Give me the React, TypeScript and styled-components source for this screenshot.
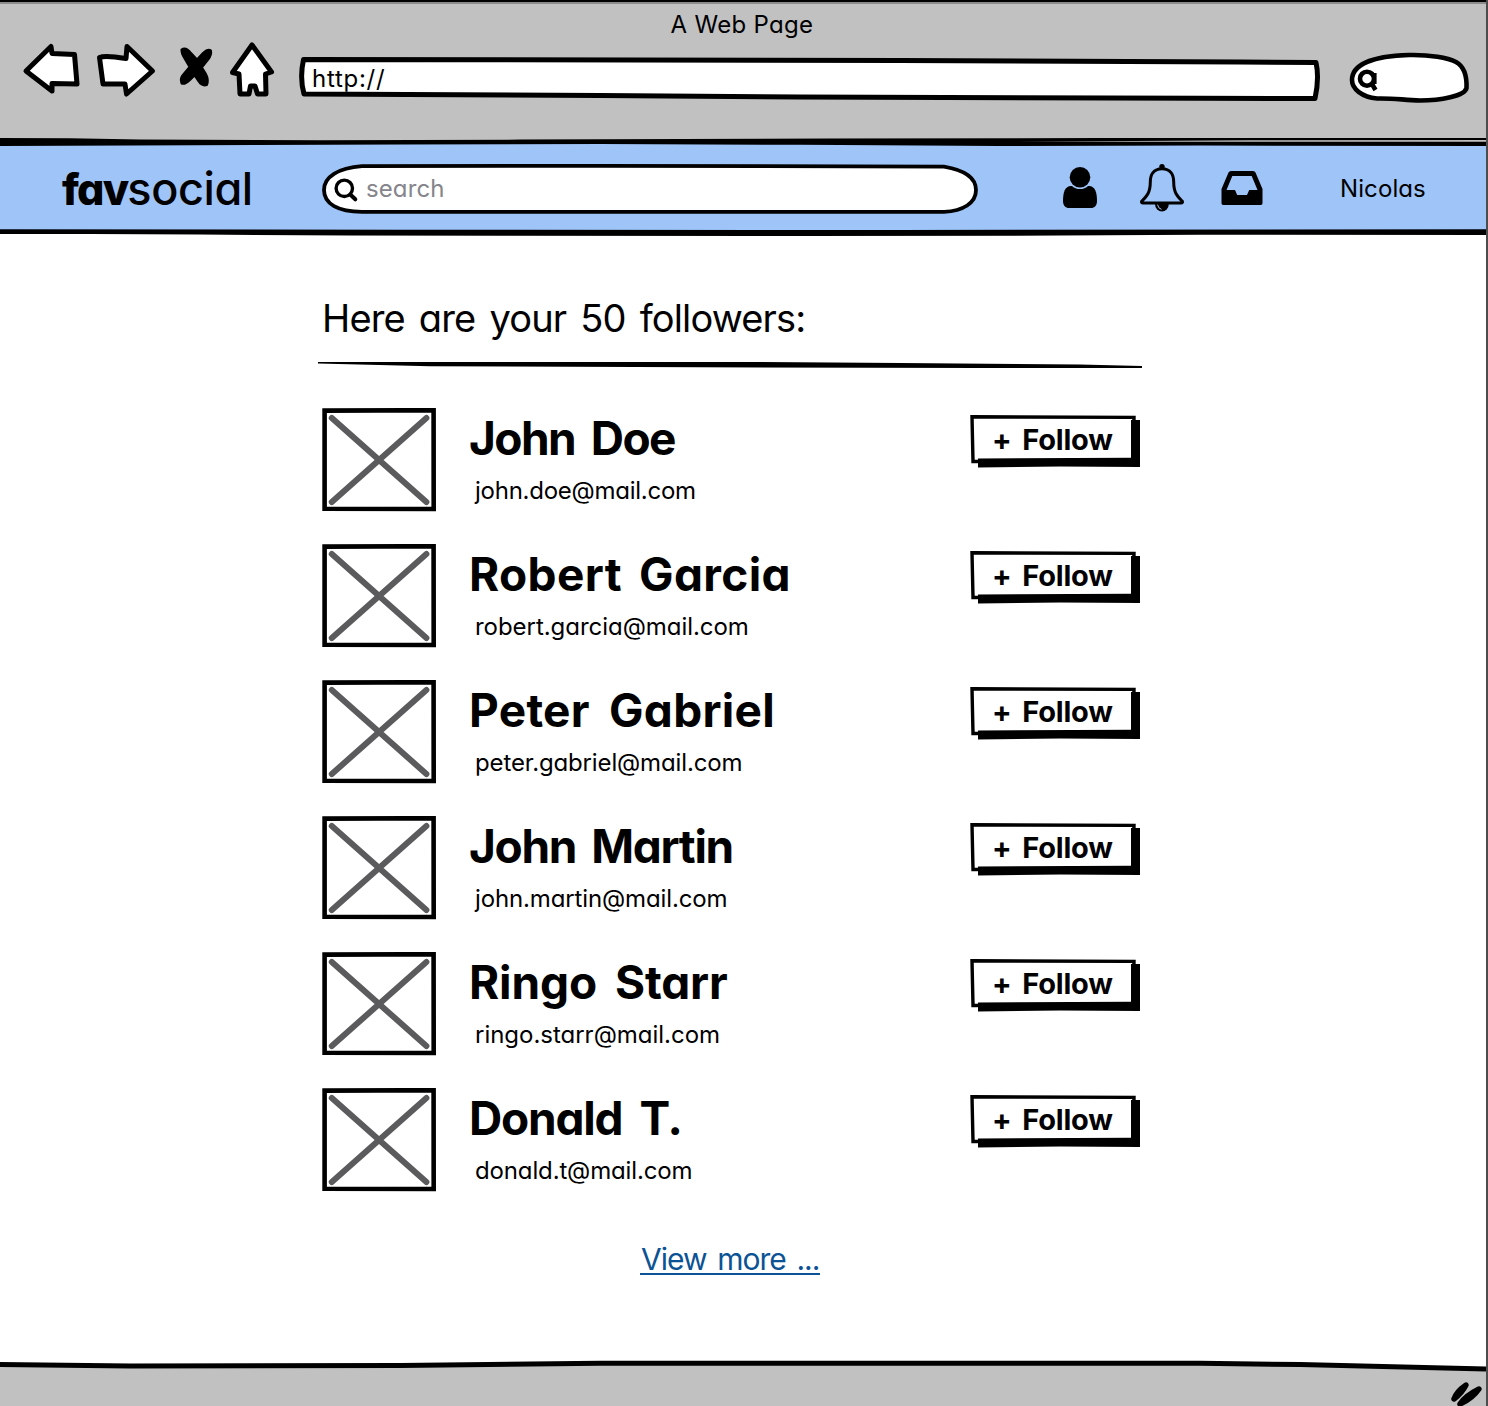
import React from 'react';
import styled, { createGlobalStyle } from 'styled-components';

const INK = '#000';
const CHROME = '#c1c1c1';
const BLUE = '#9fc4f7';
const LINK = '#0b5394';

const GlobalStyle = createGlobalStyle`
  body {
    margin: 0;
    background: #fff;
    color: ${INK};
    font-family: Inter, 'Open Sans', sans-serif;
    font-size: 24px;
    font-feature-settings: 'cv11';
  }
  svg { display: block; flex: none; }
`;

const Window = styled.div`
  box-sizing: border-box;
  display: flex;
  flex-direction: column;
  width: 1488px;
  height: 1406px;
  overflow: hidden;
  border-right: 2px solid #4c4c4c;
`;

const Chrome = styled.div`
  box-sizing: border-box;
  height: 138px;
  background: ${CHROME};
  border-top: 2px solid ${INK};
  box-shadow: inset 0 2px 0 #8b8b8b;
`;

const WindowTitle = styled.div`
  height: 40px;
  padding: 3px 2px 0 0;
  box-sizing: border-box;
  line-height: 40px;
  text-align: center;
  letter-spacing: 0.3px;
`;

const Toolbar = styled.div`
  display: flex;
  gap: 14px;
  padding-left: 22px;
`;

const Framed = styled.div`
  position: relative;
  display: flex;
  flex: none;
  > svg:first-child { position: absolute; inset: 0; }
`;

const AddressBar = styled(Framed)`
  width: 1024px;
  height: 64px;
  margin-left: 8px;
`;

const Address = styled.span`
  position: relative;
  padding: 13px 0 0 14px;
  line-height: 48px;
  letter-spacing: 0.74px;
`;

const BrowserSearch = styled.div`
  margin-left: 11px;
`;

const Rule = styled.div<{ $above: string; $below: string }>`
  flex: none;
  height: 8px;
  background: linear-gradient(${p => p.$above} 50%, ${p => p.$below} 50%);
`;

const Header = styled.header`
  box-sizing: border-box;
  display: flex;
  align-items: center;
  height: 82px;
  padding: 3px 0 0 62px;
  background: ${BLUE};
`;

const Logo = styled.div`
  width: 258px;
  font-size: 45px;
  font-weight: 500;
  line-height: 54px;
  letter-spacing: -0.4px;
  white-space: nowrap;
  b { font-size: 43px; font-weight: 800; letter-spacing: -1.8px; }
`;

const SearchField = styled(Framed)`
  align-items: center;
  width: 660px;
  height: 54px;
`;

const Placeholder = styled.span`
  position: relative;
  margin: -1px 0 0 46px;
  color: #85858b;
  letter-spacing: 0.1px;
`;

const HeaderIcons = styled.div`
  display: flex;
  gap: 32px;
  margin-left: 78px;
`;

const UserName = styled.div`
  margin-left: 72px;
  letter-spacing: 0.1px;
`;

const Main = styled.main`
  flex: 1;
  display: flex;
  flex-direction: column;
  width: 824px;
  margin-left: 318px;
`;

const Heading = styled.h1`
  margin: 58px 0 20px;
  padding-left: 4px;
  font-size: 38px;
  font-weight: 400;
  line-height: 48px;
  letter-spacing: -0.85px;
  word-spacing: 4.2px;
  white-space: nowrap;
`;

const Followers = styled.ul`
  display: flex;
  flex-direction: column;
  gap: 32px;
  margin: 38px 0 0;
  padding: 0 0 0 4px;
  list-style: none;
`;

const Follower = styled.li`
  display: flex;
  height: 104px;
`;

const Person = styled.div`
  box-sizing: border-box;
  flex: none;
  width: 533px;
  padding: 1px 0 0 33px;
`;

const Name = styled.div<{ $track: number; $gap: number }>`
  font-size: 46px;
  font-weight: 700;
  line-height: 59px;
  white-space: nowrap;
  letter-spacing: ${p => p.$track}px;
  word-spacing: ${p => p.$gap}px;
`;

const Email = styled.div<{ $track: number }>`
  padding-left: 6px;
  line-height: 46px;
  letter-spacing: ${p => p.$track}px;
`;

const FollowButton = styled.button`
  position: relative;
  flex: none;
  width: 173px;
  height: 64px;
  padding: 0 0 0 23px;
  border: 0;
  background: none;
  color: inherit;
  font: 700 29px/64px Inter, 'Open Sans', sans-serif;
  font-feature-settings: inherit;
  letter-spacing: -0.2px;
  word-spacing: 4px;
  text-align: left;
  white-space: nowrap;
  > svg { position: absolute; inset: 0; }
  > span { position: relative; }
`;

const ViewMore = styled.a`
  align-self: flex-start;
  box-sizing: border-box;
  width: 180px;
  margin: 53px 0 0 322px;
  color: ${LINK};
  border-bottom: 2px solid ${LINK};
  font-size: 30px;
  line-height: 28px;
  letter-spacing: -0.95px;
  word-spacing: 3px;
  text-indent: 1px;
  text-decoration: none;
  white-space: nowrap;
`;

const StatusBar = styled.footer`
  flex: none;
  display: flex;
  justify-content: flex-end;
  height: 32px;
  background: ${CHROME};
`;

type SketchProps = { box: [number, number, number, number]; width?: number; children: React.ReactNode };

const Sketch = ({ box, width = 5, children }: SketchProps) => (
  <svg
    width={box[2]}
    height={box[3]}
    viewBox={box.join(' ')}
    fill="#fff"
    stroke={INK}
    strokeWidth={width}
    strokeLinejoin="round"
    strokeLinecap="round"
    aria-hidden="true"
  >
    {children}
  </svg>
);

const Thumbnail = () => (
  <Sketch box={[322, 408, 114, 104]} width={4.6}>
    <path d="M324.6 410.6L433.6 410.2L433.7 509L324.6 508.8Z" strokeLinejoin="miter" />
    <path d="M331.8 418L426.4 502M426.4 418L331.8 502" stroke="#5b5b5d" strokeWidth="6" />
  </Sketch>
);

const people = [
  { name: 'John Doe', track: -1.6, gap: 6.5, email: 'john.doe@mail.com', mailTrack: -0.25 },
  { name: 'Robert Garcia', track: 0.35, gap: 6, email: 'robert.garcia@mail.com', mailTrack: -0.04 },
  { name: 'Peter Gabriel', track: 0.3, gap: 8, email: 'peter.gabriel@mail.com', mailTrack: -0.14 },
  { name: 'John Martin', track: -1.3, gap: 5.5, email: 'john.martin@mail.com', mailTrack: -0.13 },
  { name: 'Ringo Starr', track: -0.1, gap: 7, email: 'ringo.starr@mail.com', mailTrack: -0.02 },
  { name: 'Donald T.', track: -1.2, gap: 7.5, email: 'donald.t@mail.com', mailTrack: -0.14 },
];

export default function App() {
  return (
    <Window>
      <GlobalStyle />
      <Chrome>
        <WindowTitle>A Web Page</WindowTitle>
        <Toolbar>
          <Sketch box={[22, 42, 60, 64]}>
            <path d="M26 71L51 46.5L52 53.5L74.5 54.5L77 84L52 83.5L52 91Z" />
          </Sketch>
          <Sketch box={[96, 42, 62, 64]}>
            <path d="M99.5 57.5Q105 55 126 58.5L127 46.5L152.5 71L126.5 94L125 84L103 84Z" />
          </Sketch>
          <Sketch box={[172, 42, 42, 64]} width={2}>
            <path
              fill={INK}
              d="M181.500 49.500Q186 46.500 191 53L197 59.500L203 53Q208 48.500 211 50.500Q212 55 208 60L202 67.500L206 74Q209 80 207 85Q202 86.500 199 82L194.500 75.500L190 80Q185 85 181.500 83.500Q180 79 182 76L189.500 67L184.500 58.500Q181 53 181.500 49.500Z"
            />
          </Sketch>
          <Sketch box={[228, 42, 48, 64]}>
            <path d="M252 45L271.5 72L265.5 74L266 94L257.5 94L255 86L250.5 86L249 94L240 94L239 74L232.5 72.5Z" />
          </Sketch>
          <AddressBar>
            <Sketch box={[298, 42, 1024, 64]}>
              <path d="M303.5 59.5L900 60.5L1240 62L1316 62.5Q1319.5 78 1315 98.5L1200 98.2L800 97L600 95.5L304 94Q299.5 78 303.5 59.5Z" />
            </Sketch>
            <Address>http://</Address>
          </AddressBar>
          <BrowserSearch>
            <Sketch box={[1347, 42, 124, 64]}>
              <path
                strokeWidth="4.6"
                d="M1352 80C1352 64 1374 56 1409 55C1430 54.5 1448 58 1456 62C1465 67 1467 76 1466.5 88C1465 96 1440 100.5 1420 100.5C1403 100 1393 98 1377 98.5C1362 97 1352 89 1352 80Z"
              />
              <path d="M1372 84L1375.5 90M1374.3 73V84M1360 78.7A7 7 0 1 0 1374 78.7A7 7 0 1 0 1360 78.7Z" strokeWidth="4.6" strokeLinecap="butt" />
            </Sketch>
          </BrowserSearch>
        </Toolbar>
      </Chrome>
      <Rule $above={CHROME} $below={BLUE}>
        <Sketch box={[0, 138, 1486, 8]} width={0}>
          <path
            fill={INK}
            d="M0 138L70 138.3L140 139.5L320 140.2L520 139.6L830 138.6L1100 138L1486 138V140L1250 140.3L1000 141.8H1486V146L1200 145.6L1000 146L800 144.8L600 144L400 144.6L130 145.4L0 146Z"
          />
        </Sketch>
      </Rule>
      <Header>
        <Logo><b>fav</b>social</Logo>
        <SearchField>
          <Sketch box={[320, 162, 660, 54]} width={3.8}>
            <path d="M362 166.2L600 165.8L944 166.6C964 170 976 178 976 190C976 203 963 211 944 211.8H362C338 211.5 324 204 324 190C324 177 338 168 362 166.2Z" />
            <circle cx="344.3" cy="188.3" r="8.2" strokeWidth="3.4" />
            <path d="M350.5 194.7L355.3 199.3" strokeWidth="4" />
          </Sketch>
          <Placeholder>search</Placeholder>
        </SearchField>
        <HeaderIcons>
          <Sketch box={[1058, 162, 44, 54]} width={0}>
            <path fill={INK} d="M1071 186C1065 186 1063 192.5 1063 201C1063 205.5 1065.5 208 1069 208H1091C1094.5 208 1097 205.5 1097 201C1097 192.5 1095 186 1089 186Z" />
            <circle cx="1080" cy="177.3" r="11.8" fill={BLUE} />
            <circle cx="1080" cy="177.3" r="10.3" fill={INK} />
          </Sketch>
          <Sketch box={[1134, 162, 52, 54]} width={3}>
            <circle cx="1162" cy="166.6" r="2.7" fill={INK} stroke="none" />
            <path
              fill="none"
              d="M1162 168.7C1153.5 168.7 1150.3 175 1150.3 182C1150.3 193 1146.5 196.5 1141.6 201.4Q1141 203 1143 203H1181Q1183 203 1182.4 201.4C1177.5 196.5 1173.7 193 1173.7 182C1173.7 175 1170.5 168.7 1162 168.7Z"
            />
            <path fill={INK} stroke="none" d="M1155 204H1168.8A6.9 7.6 0 0 1 1155 204Z" />
            <path fill="none" stroke={BLUE} strokeWidth="1" d="M1157.6 205Q1158.3 208.7 1161.2 209.3" />
          </Sketch>
          <Sketch box={[1218, 162, 50, 54]} width={0}>
            <path
              fill={INK}
              fillRule="evenodd"
              d="M1231 171H1253Q1254.8 171 1255.5 172.6L1262.5 189V203.3Q1262.5 205 1260.8 205H1223.2Q1221.5 205 1221.5 203.3V189L1228.5 172.6Q1229.2 171 1231 171ZM1232.3 176L1226.5 190H1235L1237.2 195H1247L1249.2 190H1257.5L1251.7 176Z"
            />
          </Sketch>
        </HeaderIcons>
        <UserName>Nicolas</UserName>
      </Header>
      <Rule $above={BLUE} $below="#fff">
        <Sketch box={[0, 228, 1486, 8]} width={0}>
          <path fill={INK} d="M0 229.3L400 229.7L900 230L1486 229.3V235L1200 234.8L1060 235.6L800 236L500 235.8L350 235.4L200 234.6L90 234L0 234Z" />
        </Sketch>
      </Rule>
      <Main>
        <Heading>Here are your 50 followers:</Heading>
        <Sketch box={[318, 362, 824, 8]} width={0}>
          <path fill={INK} d="M318 362H760L900 363L1080 364.5L1142 366V368H980L700 367.3L430 366.2L318 363.5Z" />
        </Sketch>
        <Followers>
          {people.map(p => (
            <Follower key={p.email}>
              <Thumbnail />
              <Person>
                <Name $track={p.track} $gap={p.gap}>{p.name}</Name>
                <Email $track={p.mailTrack}>{p.email}</Email>
              </Person>
              <FollowButton>
                <Sketch box={[969, 408, 173, 64]} width={3.4}>
                  <path d="M972 416.8L1134 417.4L1133 460.5L973 461.5Z" strokeLinejoin="miter" />
                  <path fill={INK} stroke="none" d="M978 458.5L1131 457.8V420H1140V467L1060 466.4L978 467.4Z" />
                </Sketch>
                <span>+ Follow</span>
              </FollowButton>
            </Follower>
          ))}
        </Followers>
        <ViewMore>View more ...</ViewMore>
      </Main>
      <Sketch box={[0, 1358, 1486, 16]}>
        <path fill={CHROME} stroke="none" d="M0 1365L600 1363L1200 1363L1486 1369V1374H0Z" />
        <path fill="none" strokeLinecap="butt" d="M0 1364.5L130 1366L400 1365.5L600 1363.3L1200 1363.3L1300 1364.5L1486 1369" />
      </Sketch>
      <StatusBar>
        <Sketch box={[1446, 1374, 40, 32]} width={5.4}>
          <path fill={INK} d="M1454 1399Q1456 1392 1466 1385Q1462 1393 1454 1399M1460 1404Q1465 1396 1479 1389Q1472 1399 1460 1404" />
        </Sketch>
      </StatusBar>
    </Window>
  );
}
